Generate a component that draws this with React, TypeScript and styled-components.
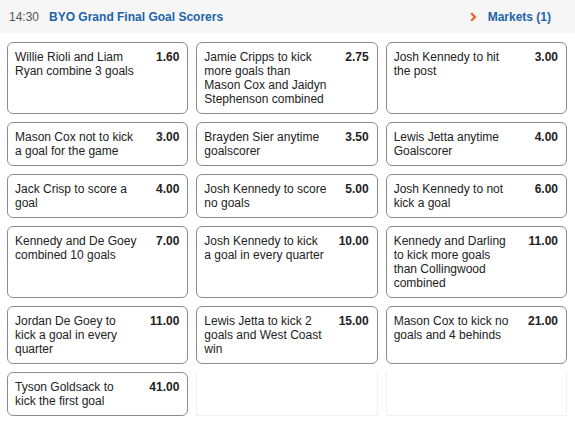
import styled, { createGlobalStyle } from 'styled-components';

type Market = {
	label: string;
	price: string;
};

const MARKETS: Market[] = [
	{ label: 'Willie Rioli and Liam Ryan combine 3 goals', price: '1.60' },
	{ label: 'Jamie Cripps to kick more goals than Mason Cox and Jaidyn Stephenson combined', price: '2.75' },
	{ label: 'Josh Kennedy to hit the post', price: '3.00' },
	{ label: 'Mason Cox not to kick a goal for the game', price: '3.00' },
	{ label: 'Brayden Sier anytime goalscorer', price: '3.50' },
	{ label: 'Lewis Jetta anytime Goalscorer', price: '4.00' },
	{ label: 'Jack Crisp to score a goal', price: '4.00' },
	{ label: 'Josh Kennedy to score no goals', price: '5.00' },
	{ label: 'Josh Kennedy to not kick a goal', price: '6.00' },
	{ label: 'Kennedy and De Goey combined 10 goals', price: '7.00' },
	{ label: 'Josh Kennedy to kick a goal in every quarter', price: '10.00' },
	{ label: 'Kennedy and Darling to kick more goals than Collingwood combined', price: '11.00' },
	{ label: 'Jordan De Goey to kick a goal in every quarter', price: '11.00' },
	{ label: 'Lewis Jetta to kick 2 goals and West Coast win', price: '15.00' },
	{ label: 'Mason Cox to kick no goals and 4 behinds', price: '21.00' },
	{ label: 'Tyson Goldsack to kick the first goal', price: '41.00' },
];

const GlobalStyle = createGlobalStyle`
	body {
		margin: 0;
		background: #ffffff;
		font-family: Arial, 'Liberation Sans', sans-serif;
	}
`;

const Chevron = () => (
	<svg width="7" height="10" viewBox="0 0 7 10">
		<path d="M1.2 1.2 L5 5 L1.2 8.8" fill="none" stroke="#e8622a" strokeWidth="2.2" />
	</svg>
);

const App = () => {
	const fillers = (3 - (MARKETS.length % 3)) % 3;
	return (
		<>
			<GlobalStyle />
			<Page>
				<Header>
					<Time>14:30</Time>
					<Title>BYO Grand Final Goal Scorers</Title>
					<MarketsLink>
						<Chevron />
						Markets (1)
					</MarketsLink>
				</Header>
				<Grid>
					{MARKETS.map((m, i) => (
						<Card key={i}>
							<Label>{m.label}</Label>
							<Price>{m.price}</Price>
						</Card>
					))}
					{Array.from({ length: fillers }).map((_, i) => (
						<EmptyCell key={`e${i}`} />
					))}
				</Grid>
			</Page>
		</>
	);
};

const Page = styled.div`
	width: 575px;
	height: 423px;
	background: #ffffff;
	font-family: Arial, 'Liberation Sans', sans-serif;
	font-size: 12px;
	color: #222222;
`;

const Header = styled.div`
	display: flex;
	align-items: center;
	height: 33px;
	padding: 0 24px 0 9px;
	background: #f6f6f6;
`;

const Time = styled.span`
	color: #555555;
	font-size: 12px;
	margin-right: 10px;
`;

const Title = styled.span`
	flex: 1;
	color: #1c64a8;
	font-weight: bold;
	font-size: 12px;
`;

const MarketsLink = styled.span`
	display: flex;
	align-items: center;
	gap: 11px;
	color: #1c64a8;
	font-weight: bold;
	font-size: 12px;
`;

const Grid = styled.div`
	display: grid;
	grid-template-columns: repeat(3, 1fr);
	column-gap: 8px;
	row-gap: 8px;
	padding: 9px 8px 0 7px;
`;

const Card = styled.div`
	display: flex;
	align-items: flex-start;
	justify-content: space-between;
	padding: 7px 8px 7px 7px;
	border: 1px solid #8c8c8c;
	border-radius: 6px;
	line-height: 14px;
	min-height: 28px;
`;

const Label = styled.div`
	width: 122.5px;
	color: #222222;
`;

const Price = styled.div`
	font-weight: bold;
	color: #222222;
	white-space: nowrap;
`;

const EmptyCell = styled.div`
	border: 1px solid #f0f0f0;
	border-top: none;
`;

export default App;
